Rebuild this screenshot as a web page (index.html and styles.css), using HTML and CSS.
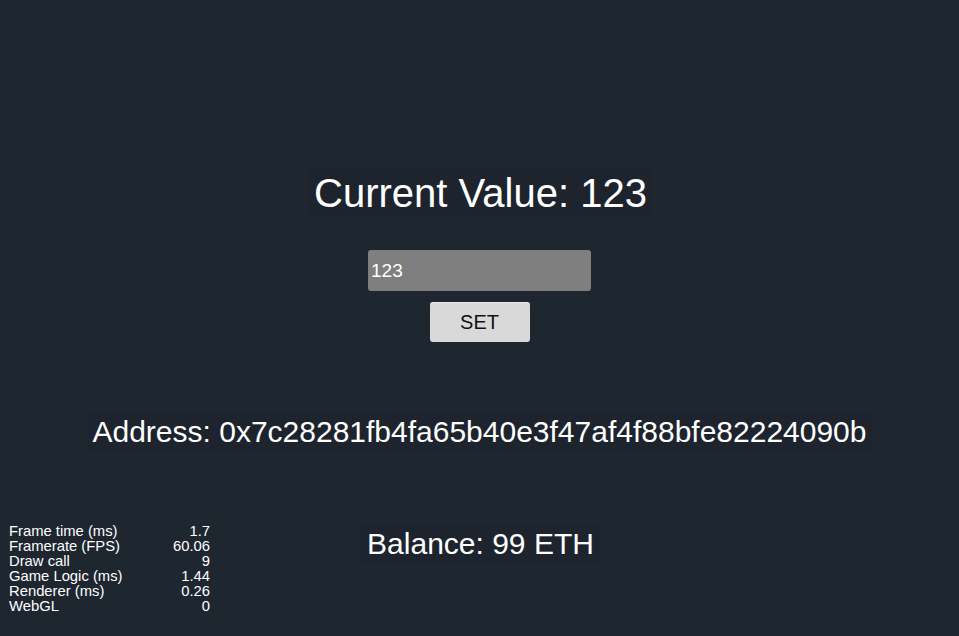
FILE: index.html
```html
<!DOCTYPE html>
<html lang="en">
<head>
<meta charset="utf-8">
<title>Counter</title>
<link rel="stylesheet" href="styles.css">
</head>
<body>
<main class="stage">
  <div class="label title">Current Value: 123</div>
  <input class="value-input" type="text" value="123">
  <button class="set-btn" type="button">SET</button>
  <div class="label address">Address: 0x7c28281fb4fa65b40e3f47af4f88bfe82224090b</div>
  <div class="label balance">Balance: 99 ETH</div>
</main>
<div class="stats">
  <span>Frame time (ms)</span><span class="num">1.7</span>
  <span>Framerate (FPS)</span><span class="num">60.06</span>
  <span>Draw call</span><span class="num">9</span>
  <span>Game Logic (ms)</span><span class="num">1.44</span>
  <span>Renderer (ms)</span><span class="num">0.26</span>
  <span>WebGL</span><span class="num">0</span>
</div>
</body>
</html>
```
FILE: styles.css
```css
html, body {
  margin: 0;
  padding: 0;
}
body {
  width: 959px;
  height: 636px;
  overflow: hidden;
  position: relative;
  background: #1e2630;
  color: #ffffff;
  font-family: "Liberation Sans", Arial, Helvetica, sans-serif;
}
.stage {
  display: flex;
  flex-direction: column;
  align-items: center;
  padding-top: 169px;
}
.label {
  white-space: nowrap;
  color: #ffffff;
  background: rgba(0, 0, 0, 0.03);
}
.title {
  font-size: 40px;
  line-height: 48px;
  padding: 0 6px;
  transform: translateX(1px);
}
.value-input {
  margin-top: 33px;
  width: 223px;
  height: 41px;
  box-sizing: border-box;
  border: none;
  outline: none;
  border-radius: 3px;
  background: #7f7f7f;
  color: #ffffff;
  font-family: "Liberation Sans", Arial, Helvetica, sans-serif;
  font-size: 19px;
  padding: 1px 0 0 3px;
}
.set-btn {
  margin-top: 11px;
  width: 100px;
  height: 40px;
  box-sizing: border-box;
  border: none;
  border-top: 1px solid #ececec;
  border-radius: 3px;
  background: #d9d9d9;
  color: #111111;
  font-family: "Liberation Sans", Arial, Helvetica, sans-serif;
  font-size: 20px;
  padding: 0;
}
.address {
  margin-top: 72px;
  font-size: 30px;
  line-height: 36px;
  padding: 0 5px;
}
.balance {
  margin-top: 76px;
  font-size: 30px;
  line-height: 36px;
  padding: 0 6px;
  transform: translateX(1px);
}
.stats {
  position: absolute;
  left: 9px;
  top: 524px;
  width: 201px;
  display: grid;
  grid-template-columns: 1fr auto;
  font-size: 14.8px;
  line-height: 15px;
  color: #ffffff;
}
.stats .num {
  text-align: right;
}
```
